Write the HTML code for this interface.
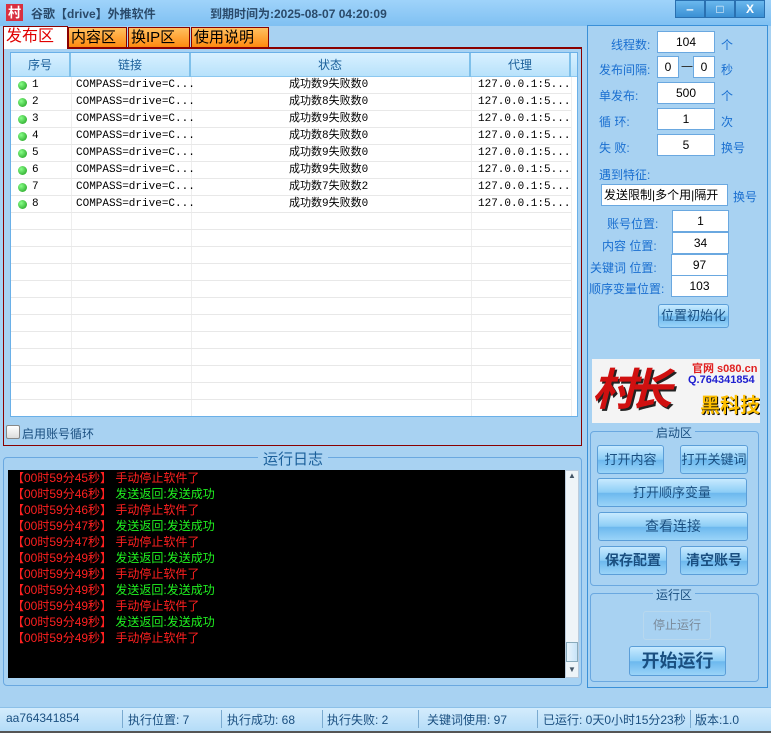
<!DOCTYPE html>
<html><head><meta charset="utf-8"><style>
*{margin:0;padding:0;box-sizing:border-box}
body{width:771px;height:733px;background:#a8d2f2;font-family:"Liberation Sans","Noto Sans CJK SC",sans-serif;font-size:12px;position:relative;overflow:hidden}
.a{position:absolute}
.title{left:0;top:0;width:771px;height:26px;background:linear-gradient(#9fd3fa,#7fc0f2)}
.wb{top:0;height:18px;background:linear-gradient(#6ab8ee,#3a90d4);border:1px solid #2a70b0;color:#fff;font-weight:bold;text-align:center;line-height:16px;font-size:12px}
.tab{top:27px;height:21px;border:1px solid #8a0000;background:linear-gradient(#ffc060,#ff8a10);font-size:15px;line-height:19px;padding:0 2px;color:#000;white-space:nowrap;overflow:hidden}
.row{left:11px;width:560px;height:17px;border-bottom:1px solid #e8e8e8;font-family:"Liberation Mono","Noto Sans CJK SC",monospace;font-size:11px;line-height:16px}
.row span{position:absolute;top:0}
.dot{width:9px;height:9px;border-radius:50%;background:radial-gradient(circle at 35% 35%,#8f8,#1a9a1a);top:4px!important;left:7px}
.lbl{color:#1a6fd0;font-size:12px;white-space:nowrap}
.inp{background:#fff;border:1px solid #6aa8e0;text-align:center;font-size:12px;line-height:20px;height:22px;white-space:nowrap;overflow:hidden}
.btn{border:1px solid #5b9ed8;border-radius:3px;background:linear-gradient(#c8eaff 0%,#8ccdf6 50%,#6cb8ee 52%,#9ad4f8 100%);color:#1a4f80;text-align:center;font-size:13px;white-space:nowrap}
.log{left:12px;font-size:12px;line-height:16px;white-space:nowrap}
.r{color:#ff2020}.g{color:#20f020}
.sb{top:711px;font-size:12px;color:#1a4f80;white-space:nowrap}
.sep{top:710px;width:1px;height:18px;background:#7aaad0}
</style></head><body>
<div class="a title"></div>
<div class="a" style="left:6px;top:4px;width:17px;height:17px;background:#d83040;color:#fff;font-size:13px;line-height:17px;text-align:center;font-weight:bold">村</div>
<div class="a" style="left:31px;top:5px;font-size:12px;font-weight:bold;color:#2a4a6a">谷歌【drive】外推软件</div>
<div class="a" style="left:210px;top:5px;font-size:12px;font-weight:bold;color:#2a4a6a">到期时间为:2025-08-07 04:20:09</div>
<div class="a wb" style="left:675px;width:30px">‒</div>
<div class="a wb" style="left:705px;width:30px">□</div>
<div class="a wb" style="left:735px;width:30px">X</div>

<div class="a" style="left:3px;top:47px;width:579px;height:399px;border:1px solid #8a0000;border-top:2px solid #8a0000"></div>
<div class="a tab" style="left:3px;top:26px;height:23px;background:#fff;border-bottom:none;color:#e00000;font-size:16px;width:65px">发布区</div>
<div class="a tab" style="left:68px;width:59px">内容区</div>
<div class="a tab" style="left:128px;width:62px">换IP区</div>
<div class="a tab" style="left:191px;width:78px">使用说明</div>

<div class="a" style="left:10px;top:52px;width:568px;height:365px;background:#fff;border:1px solid #6ab0e8"></div>
<div class="a" style="left:11px;top:53px;width:566px;height:24px;background:linear-gradient(#d8f0ff,#b8e2fb);border-bottom:1px solid #8cc8f0"></div>
<div class="a" style="left:11px;top:53px;width:60px;height:24px;border-right:2px solid #7ec0ea;color:#1a5f9a;line-height:24px;text-align:center">序号</div>
<div class="a" style="left:71px;top:53px;width:120px;height:24px;border-right:2px solid #7ec0ea;color:#1a5f9a;line-height:24px;text-align:center">链接</div>
<div class="a" style="left:191px;top:53px;width:280px;height:24px;border-right:2px solid #7ec0ea;color:#1a5f9a;line-height:24px;text-align:center">状态</div>
<div class="a" style="left:471px;top:53px;width:100px;height:24px;border-right:2px solid #7ec0ea;color:#1a5f9a;line-height:24px;text-align:center">代理</div>
<div class="a" style="left:71px;top:77px;width:1px;height:339px;background:#eee"></div>
<div class="a" style="left:191px;top:77px;width:1px;height:339px;background:#eee"></div>
<div class="a" style="left:471px;top:77px;width:1px;height:339px;background:#eee"></div>
<div class="a" style="left:571px;top:77px;width:1px;height:339px;background:#eee"></div>

<div class="a row" style="top:77px"><span class="a dot"></span><span style="left:21px">1</span><span style="left:65px">COMPASS=drive=C...</span><span style="left:278px">成功数9失败数0</span><span style="left:467px">127.0.0.1:5...</span></div>
<div class="a row" style="top:94px"><span class="a dot"></span><span style="left:21px">2</span><span style="left:65px">COMPASS=drive=C...</span><span style="left:278px">成功数8失败数0</span><span style="left:467px">127.0.0.1:5...</span></div>
<div class="a row" style="top:111px"><span class="a dot"></span><span style="left:21px">3</span><span style="left:65px">COMPASS=drive=C...</span><span style="left:278px">成功数9失败数0</span><span style="left:467px">127.0.0.1:5...</span></div>
<div class="a row" style="top:128px"><span class="a dot"></span><span style="left:21px">4</span><span style="left:65px">COMPASS=drive=C...</span><span style="left:278px">成功数8失败数0</span><span style="left:467px">127.0.0.1:5...</span></div>
<div class="a row" style="top:145px"><span class="a dot"></span><span style="left:21px">5</span><span style="left:65px">COMPASS=drive=C...</span><span style="left:278px">成功数9失败数0</span><span style="left:467px">127.0.0.1:5...</span></div>
<div class="a row" style="top:162px"><span class="a dot"></span><span style="left:21px">6</span><span style="left:65px">COMPASS=drive=C...</span><span style="left:278px">成功数9失败数0</span><span style="left:467px">127.0.0.1:5...</span></div>
<div class="a row" style="top:179px"><span class="a dot"></span><span style="left:21px">7</span><span style="left:65px">COMPASS=drive=C...</span><span style="left:278px">成功数7失败数2</span><span style="left:467px">127.0.0.1:5...</span></div>
<div class="a row" style="top:196px"><span class="a dot"></span><span style="left:21px">8</span><span style="left:65px">COMPASS=drive=C...</span><span style="left:278px">成功数9失败数0</span><span style="left:467px">127.0.0.1:5...</span></div>
<div class="a row" style="top:213px"></div><div class="a row" style="top:230px"></div><div class="a row" style="top:247px"></div><div class="a row" style="top:264px"></div><div class="a row" style="top:281px"></div><div class="a row" style="top:298px"></div><div class="a row" style="top:315px"></div><div class="a row" style="top:332px"></div><div class="a row" style="top:349px"></div><div class="a row" style="top:366px"></div><div class="a row" style="top:383px"></div>

<div class="a" style="left:6px;top:425px;width:14px;height:14px;border:1px solid #888;border-radius:2px;background:linear-gradient(#fff,#ddd)"></div>
<div class="a" style="left:22px;top:425px;color:#1a4f80">启用账号循环</div>

<div class="a" style="left:3px;top:457px;width:579px;height:229px;border:1px solid #6aa8e0;border-radius:4px"></div>
<div class="a" style="left:258px;top:448px;padding:0 5px;background:#a8d2f2;color:#1a5f9a;font-size:15px">运行日志</div>
<div class="a" style="left:8px;top:470px;width:558px;height:208px;background:#000"></div>
<div class="a" style="left:565px;top:470px;width:14px;height:208px;background:#eef4f8;border:1px solid #bcd"></div>
<div class="a" style="left:566px;top:642px;width:12px;height:20px;background:linear-gradient(90deg,#e8f4fc,#c8e4f8);border:1px solid #8ab"></div>
<div class="a" style="left:568px;top:471px;font-size:8px;color:#456">▲</div>
<div class="a" style="left:568px;top:665px;font-size:8px;color:#456">▼</div>
<div class="a log" style="top:470px"><span class="r">【00时59分45秒】 手动停止软件了</span></div>
<div class="a log" style="top:486px"><span class="r">【00时59分46秒】 </span><span class="g">发送返回:发送成功</span></div>
<div class="a log" style="top:502px"><span class="r">【00时59分46秒】 手动停止软件了</span></div>
<div class="a log" style="top:518px"><span class="r">【00时59分47秒】 </span><span class="g">发送返回:发送成功</span></div>
<div class="a log" style="top:534px"><span class="r">【00时59分47秒】 手动停止软件了</span></div>
<div class="a log" style="top:550px"><span class="r">【00时59分49秒】 </span><span class="g">发送返回:发送成功</span></div>
<div class="a log" style="top:566px"><span class="r">【00时59分49秒】 手动停止软件了</span></div>
<div class="a log" style="top:582px"><span class="r">【00时59分49秒】 </span><span class="g">发送返回:发送成功</span></div>
<div class="a log" style="top:598px"><span class="r">【00时59分49秒】 手动停止软件了</span></div>
<div class="a log" style="top:614px"><span class="r">【00时59分49秒】 </span><span class="g">发送返回:发送成功</span></div>
<div class="a log" style="top:630px"><span class="r">【00时59分49秒】 手动停止软件了</span></div>

<!-- right panel -->
<div class="a" style="left:587px;top:25px;width:181px;height:663px;border:1px solid #3a90d8"></div>
<div class="a lbl" style="left:611px;top:36px">线程数:</div>
<div class="a inp" style="left:657px;top:31px;width:58px">104</div>
<div class="a lbl" style="left:721px;top:36px">个</div>
<div class="a lbl" style="left:599px;top:61px">发布间隔:</div>
<div class="a inp" style="left:657px;top:56px;width:22px">0</div>
<div class="a" style="left:681px;top:58px;color:#333">一</div>
<div class="a inp" style="left:693px;top:56px;width:22px">0</div>
<div class="a lbl" style="left:721px;top:61px">秒</div>
<div class="a lbl" style="left:599px;top:87px">单发布:</div>
<div class="a inp" style="left:657px;top:82px;width:58px">500</div>
<div class="a lbl" style="left:721px;top:87px">个</div>
<div class="a lbl" style="left:599px;top:113px">循 环:</div>
<div class="a inp" style="left:657px;top:108px;width:58px">1</div>
<div class="a lbl" style="left:721px;top:113px">次</div>
<div class="a lbl" style="left:599px;top:139px">失 败:</div>
<div class="a inp" style="left:657px;top:134px;width:58px">5</div>
<div class="a lbl" style="left:721px;top:139px">换号</div>
<div class="a lbl" style="left:599px;top:166px">遇到特征:</div>
<div class="a inp" style="left:601px;top:184px;width:127px;text-align:left;padding-left:2px;color:#000">发送限制|多个用|隔开</div>
<div class="a lbl" style="left:733px;top:188px">换号</div>
<div class="a lbl" style="left:607px;top:215px">账号位置:</div>
<div class="a inp" style="left:672px;top:210px;width:57px">1</div>
<div class="a lbl" style="left:602px;top:237px">内容 位置:</div>
<div class="a inp" style="left:672px;top:232px;width:57px">34</div>
<div class="a lbl" style="left:590px;top:259px">关键词 位置:</div>
<div class="a inp" style="left:671px;top:254px;width:57px">97</div>
<div class="a lbl" style="left:589px;top:280px">顺序变量位置:</div>
<div class="a inp" style="left:671px;top:275px;width:57px">103</div>
<div class="a btn" style="left:658px;top:304px;width:71px;height:24px;line-height:22px">位置初始化</div>

<div class="a" style="left:592px;top:359px;width:168px;height:64px;background:#f4f4f4;overflow:hidden">
<div class="a" style="left:0px;top:2px;width:100px;height:60px;color:#d01010;font-size:44px;font-weight:bold;line-height:60px;font-style:italic;text-shadow:2px 2px 0 #222;letter-spacing:-8px;white-space:nowrap">村长</div>
<div class="a" style="left:100px;top:1px;color:#e02020;font-weight:bold;font-size:11px;white-space:nowrap">官网 s080.cn</div>
<div class="a" style="left:96px;top:15px;color:#2020d0;font-weight:bold;font-size:11px;white-space:nowrap">Q.764341854</div>
<div class="a" style="left:108px;top:30px;color:#ffc000;font-weight:bold;font-size:20px;text-shadow:1px 1px 0 #000;white-space:nowrap">黑科技</div>
</div>

<div class="a" style="left:590px;top:431px;width:169px;height:155px;border:1px solid #6aa8e0;border-radius:4px"></div>
<div class="a" style="left:653px;top:424px;padding:0 3px;background:#a8d2f2;color:#1a4f80">启动区</div>
<div class="a btn" style="left:597px;top:445px;width:67px;height:29px;line-height:27px">打开内容</div>
<div class="a btn" style="left:680px;top:445px;width:68px;height:29px;line-height:27px">打开关键词</div>
<div class="a btn" style="left:597px;top:478px;width:150px;height:29px;line-height:27px">打开顺序变量</div>
<div class="a btn" style="left:598px;top:512px;width:150px;height:29px;line-height:27px;font-size:14px">查看连接</div>
<div class="a btn" style="left:599px;top:546px;width:68px;height:29px;line-height:27px;font-size:14px;font-weight:bold">保存配置</div>
<div class="a btn" style="left:680px;top:546px;width:68px;height:29px;line-height:27px;font-size:14px;font-weight:bold">清空账号</div>

<div class="a" style="left:590px;top:593px;width:169px;height:89px;border:1px solid #6aa8e0;border-radius:4px"></div>
<div class="a" style="left:653px;top:586px;padding:0 3px;background:#a8d2f2;color:#1a4f80">运行区</div>
<div class="a" style="left:643px;top:611px;width:68px;height:29px;border:1px solid #b8d8ee;border-radius:3px;background:#a8d2f2;color:#7a8a9a;text-align:center;line-height:27px">停止运行</div>
<div class="a btn" style="left:629px;top:646px;width:97px;height:30px;line-height:28px;font-size:18px;font-weight:bold">开始运行</div>

<!-- status bar -->
<div class="a" style="left:0;top:707px;width:771px;height:24px;background:linear-gradient(#d4ecfc,#b4dcf8);border-top:1px solid #8cc0e8"></div>
<div class="a" style="left:0;top:731px;width:771px;height:2px;background:#555"></div>
<div class="a sb" style="left:6px">aa764341854</div>
<div class="a sep" style="left:122px"></div>
<div class="a sb" style="left:128px">执行位置: 7</div>
<div class="a sep" style="left:221px"></div>
<div class="a sb" style="left:227px">执行成功: 68</div>
<div class="a sep" style="left:322px"></div>
<div class="a sb" style="left:327px">执行失败: 2</div>
<div class="a sep" style="left:418px"></div>
<div class="a sb" style="left:427px">关键词使用: 97</div>
<div class="a sep" style="left:537px"></div>
<div class="a sb" style="left:543px;width:146px;overflow:hidden">已运行: 0天0小时15分23秒</div>
<div class="a sep" style="left:690px"></div>
<div class="a sb" style="left:695px">版本:1.0</div>
</body></html>
